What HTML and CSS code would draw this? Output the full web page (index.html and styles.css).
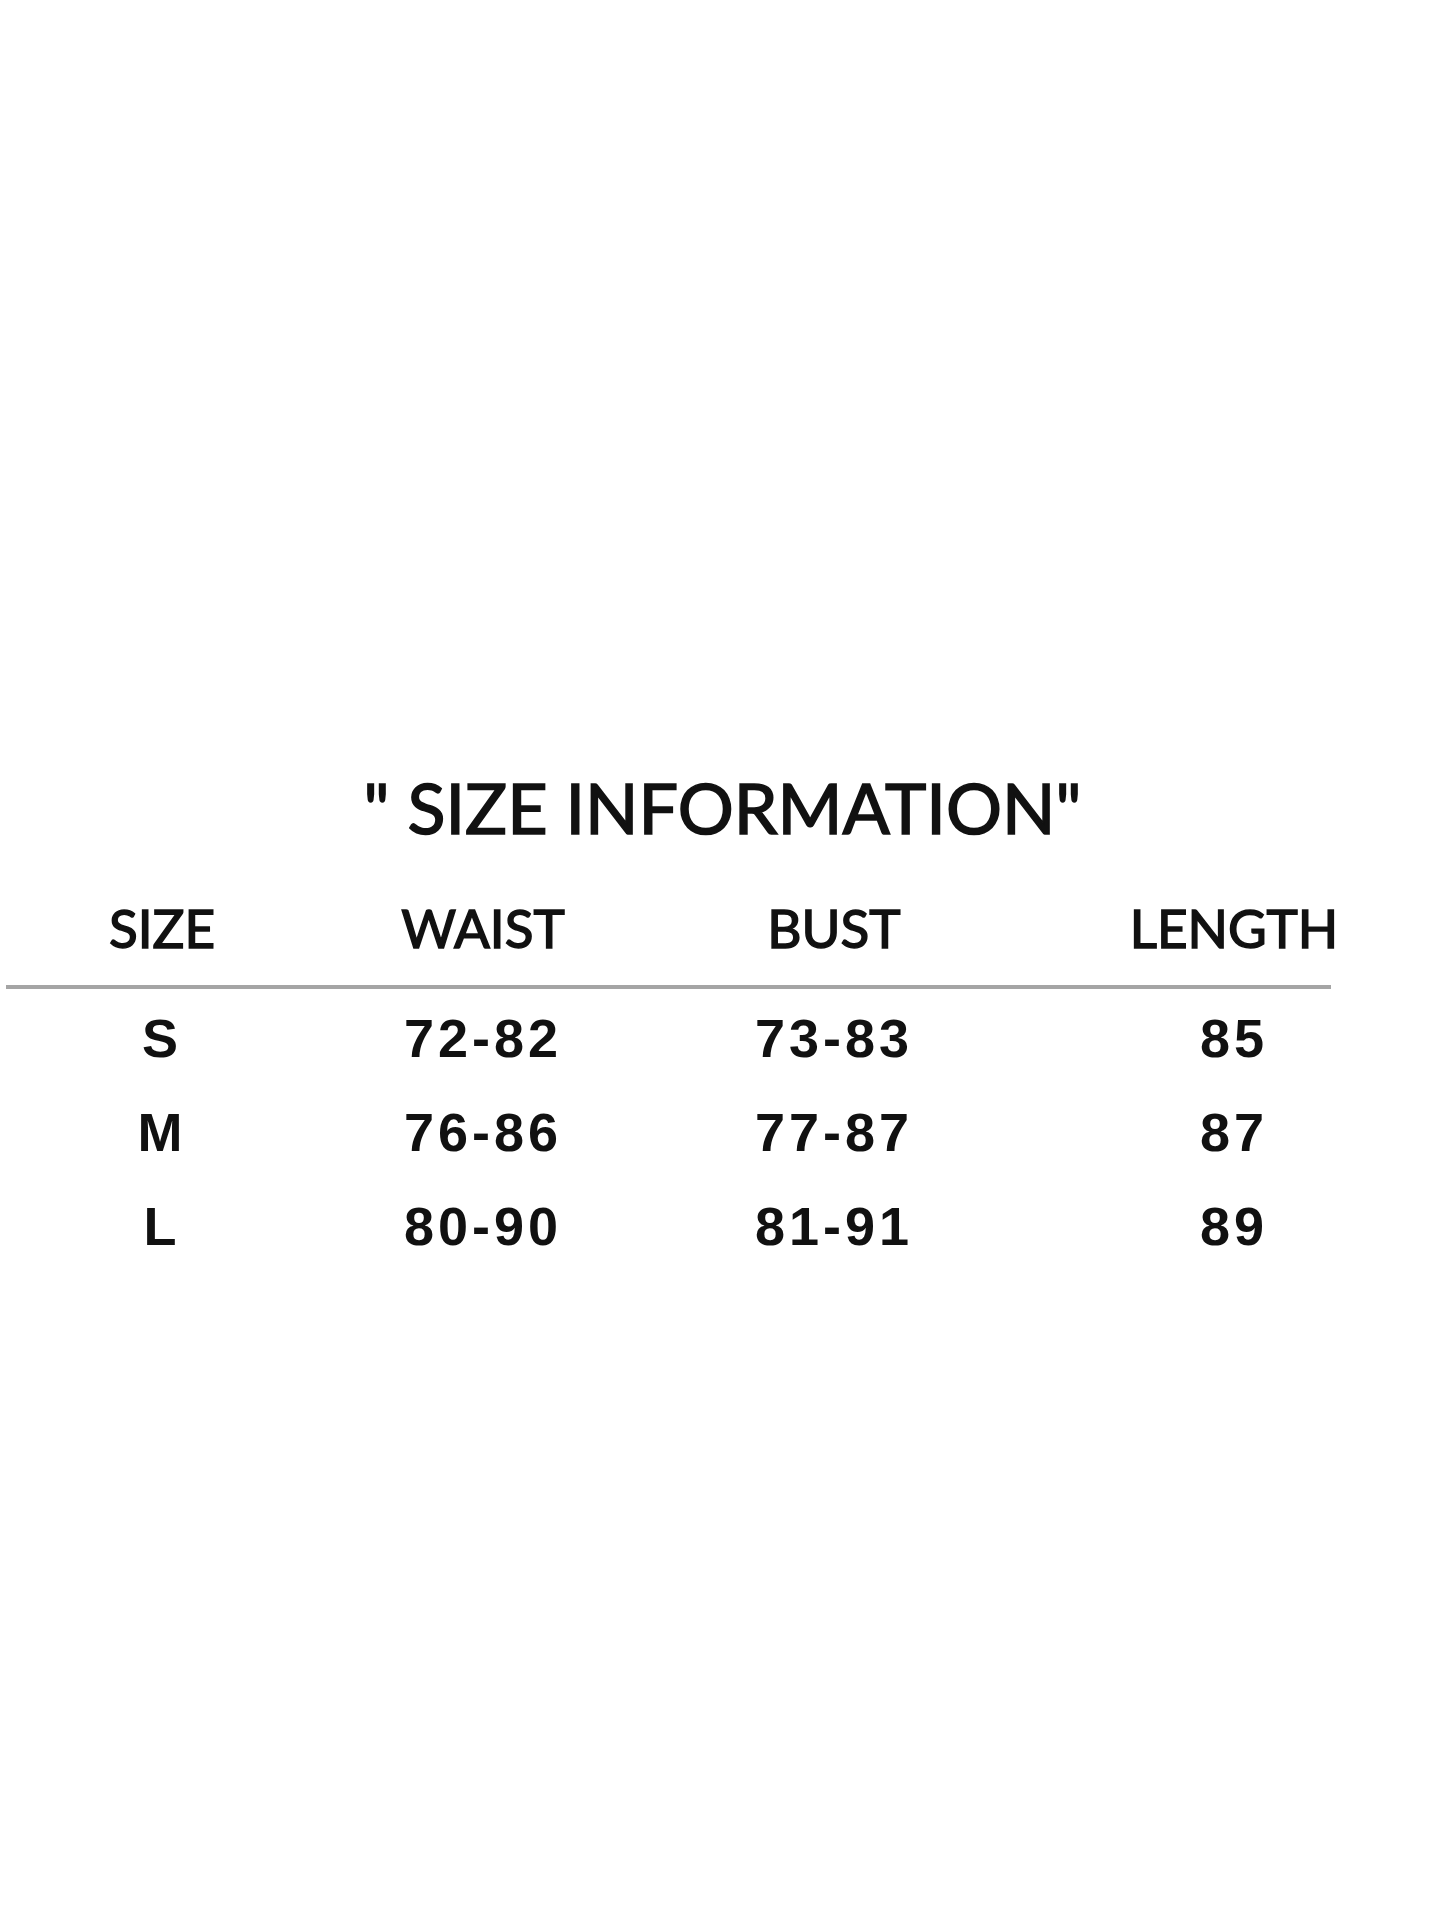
FILE: index.html
```html
<!DOCTYPE html>
<html>
<head>
<meta charset="utf-8">
<link rel="stylesheet" href="styles.css">
</head>
<body>
<main class="page">
  <h1 class="title">" SIZE INFORMATION"</h1>
  <div class="grid head">
    <div>SIZE</div><div>WAIST</div><div>BUST</div><div>LENGTH</div>
  </div>
  <div class="rule"></div>
  <div class="grid row"><div>S</div><div>72-82</div><div>73-83</div><div>85</div></div>
  <div class="grid row"><div>M</div><div>76-86</div><div>77-87</div><div>87</div></div>
  <div class="grid row"><div>L</div><div>80-90</div><div>81-91</div><div>89</div></div>
</main>
</body>
</html>
```

FILE: styles.css
```css
html, body {
  margin: 0;
  padding: 0;
  background: #ffffff;
}
.page {
  width: 1445px;
  height: 1927px;
  padding-top: 772px;
  box-sizing: border-box;
  color: #111;
}
.title {
  margin: 0;
  font-family: Lato, "Open Sans", sans-serif;
  font-weight: 400;
  font-size: 70px;
  line-height: 70px;
  text-align: center;
  -webkit-text-stroke: 1.6px #111;
}
.grid {
  display: grid;
  grid-template-columns: 324px 318px 384px 416px;
  text-align: center;
}
.head {
  margin-top: 59px;
  font-family: Lato, "Open Sans", sans-serif;
  font-weight: 400;
  font-size: 53px;
  line-height: 53px;
  -webkit-text-stroke: 1.5px #111;
}
.rule {
  margin: 31px 114px 0 6px;
  height: 4px;
  background: #a5a5a5;
}
.row {
  font-family: "Liberation Sans", Arial, sans-serif;
  font-weight: 700;
  font-size: 54px;
  line-height: 94px;
  letter-spacing: 4px;
}
.rule + .row { margin-top: 2px; }
```
